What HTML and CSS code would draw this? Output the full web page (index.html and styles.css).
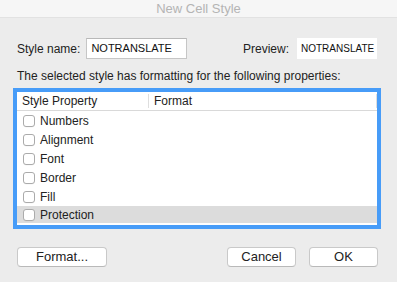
FILE: index.html
```html
<!DOCTYPE html>
<html>
<head>
<meta charset="utf-8">
<link rel="stylesheet" href="styles.css">
</head>
<body>
<div class="window">
  <div class="titlebar">New Cell Style</div>
  <div class="content">
    <div class="name-row">
      <div class="field">
        <span class="label label-name">Style name:</span>
        <div class="input">NOTRANSLATE</div>
      </div>
      <div class="field">
        <span class="label">Preview:</span>
        <div class="preview">NOTRANSLATE</div>
      </div>
    </div>
    <div class="desc">The selected style has formatting for the following properties:</div>
    <div class="table">
      <div class="thead">
        <div class="th th-prop">Style Property</div>
        <div class="th th-format">Format</div>
      </div>
      <div class="row"><span class="cb"></span><span>Numbers</span></div>
      <div class="row"><span class="cb"></span><span>Alignment</span></div>
      <div class="row"><span class="cb"></span><span>Font</span></div>
      <div class="row"><span class="cb"></span><span>Border</span></div>
      <div class="row"><span class="cb"></span><span>Fill</span></div>
      <div class="row selected"><span class="cb"></span><span>Protection</span></div>
    </div>
    <div class="buttons">
      <div class="btn btn-format">Format...</div>
      <div class="right-buttons">
        <div class="btn btn-cancel">Cancel</div>
        <div class="btn btn-ok">OK</div>
      </div>
    </div>
  </div>
</div>
</body>
</html>
```
FILE: styles.css
```css
html, body {
  margin: 0;
  padding: 0;
}
body {
  width: 397px;
  height: 282px;
  background: #ececec;
  font-family: "Liberation Sans", Arial, sans-serif;
  font-size: 12px;
  color: #222;
  overflow: hidden;
}
.titlebar {
  height: 17px;
  line-height: 17px;
  background: #f6f6f6;
  border-bottom: 1px solid #e2e2e2;
  text-align: center;
  font-size: 13px;
  color: #b4b4b4;
}
.content {
  padding: 20px 16px 0 13px;
}
.name-row {
  display: flex;
  justify-content: space-between;
  align-items: center;
  padding-left: 4px;
  padding-right: 4px;
  height: 21px;
}
.field {
  display: flex;
  align-items: center;
}
.label {
  margin-right: 8px;
}
.label-name {
  margin-right: 6px;
}
.input {
  width: 95px;
  height: 19px;
  line-height: 19px;
  padding-left: 4px;
  background: #fff;
  border: 1px solid #c6c6c6;
  border-top-color: #b8b8b8;
  font-size: 11px;
  color: #111;
}
.preview {
  width: 76px;
  height: 21px;
  line-height: 21px;
  padding-left: 4px;
  background: #fff;
  font-size: 10px;
  color: #111;
}
.desc {
  margin-top: 10px;
  padding-left: 4px;
  line-height: 15px;
}
.table {
  margin-top: 4px;
  width: 360px;
  border: 4px solid #479cf8;
  background: #fff;
}
.thead {
  display: flex;
  height: 18px;
  line-height: 18px;
  border-bottom: 1px solid #d9d9d9;
}
.th {
  padding-left: 5px;
}
.th-prop {
  width: 126px;
  border-right: 1px solid #dedede;
  margin: 2px 0;
  line-height: 14px;
}
.th-format {
  flex: 1;
  line-height: 14px;
  margin: 2px 0;
  border-right: 1px solid #dedede;
}
.row {
  display: flex;
  align-items: center;
  height: 19px;
  padding-left: 6px;
}
.row.selected {
  background: #dcdcdc;
  height: 17px;
  border-bottom: 2px solid #fff;
}
.cb {
  width: 10px;
  height: 10px;
  border: 1px solid #ababab;
  border-radius: 3px;
  background: #fff;
  margin-right: 5px;
  box-shadow: 0 0.5px 0 rgba(0,0,0,0.05);
}
.buttons {
  margin-top: 18px;
  display: flex;
  justify-content: space-between;
  padding-left: 4px;
  padding-right: 3px;
}
.right-buttons {
  display: flex;
  gap: 13px;
}
.btn {
  height: 18px;
  line-height: 18px;
  text-align: center;
  background: #fff;
  border: 1px solid #c9c9c9;
  border-bottom-color: #b9b9b9;
  border-radius: 4px;
  font-size: 13px;
  color: #222;
}
.btn-format {
  width: 88px;
}
.btn-cancel {
  width: 67px;
}
.btn-ok {
  width: 67px;
}
```
